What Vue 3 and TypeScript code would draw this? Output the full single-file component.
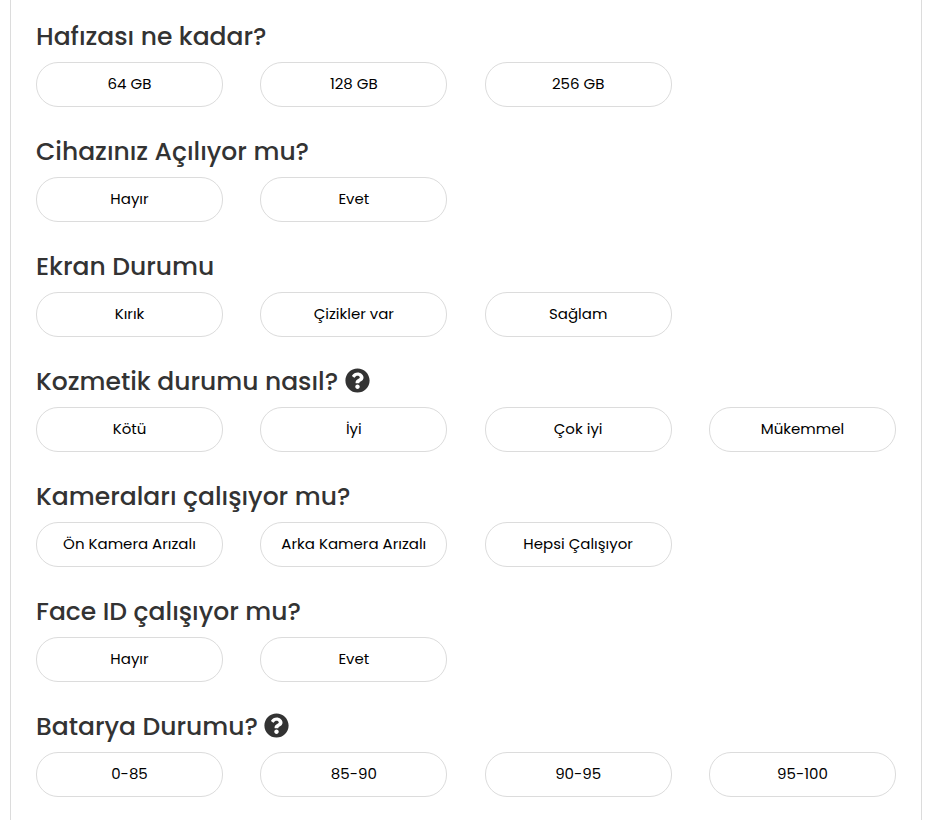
<script setup lang="ts">
interface Question {
  title: string
  help?: boolean
  options: string[]
}

const questions: Question[] = [
  { title: 'Hafızası ne kadar?', options: ['64 GB', '128 GB', '256 GB'] },
  { title: 'Cihazınız Açılıyor mu?', options: ['Hayır', 'Evet'] },
  { title: 'Ekran Durumu', options: ['Kırık', 'Çizikler var', 'Sağlam'] },
  {
    title: 'Kozmetik durumu nasıl?',
    help: true,
    options: ['Kötü', 'İyi', 'Çok iyi', 'Mükemmel'],
  },
  {
    title: 'Kameraları çalışıyor mu?',
    options: ['Ön Kamera Arızalı', 'Arka Kamera Arızalı', 'Hepsi Çalışıyor'],
  },
  { title: 'Face ID çalışıyor mu?', options: ['Hayır', 'Evet'] },
  { title: 'Batarya Durumu?', help: true, options: ['0-85', '85-90', '90-95', '95-100'] },
]
</script>

<template>
  <main class="panel">
    <section v-for="question in questions" :key="question.title" class="question">
      <h2 class="title">
        <span>{{ question.title }}</span>
        <svg v-if="question.help" class="help" viewBox="0 0 512 512" aria-hidden="true">
          <path
            fill="currentColor"
            d="M504 256c0 136.997-111.043 248-248 248S8 392.997 8 256C8 119.083 119.043 8 256 8s248 111.083 248 248zM262.655 90c-54.497 0-89.255 22.957-116.549 63.758-3.536 5.286-2.353 12.415 2.715 16.258l34.699 26.31c5.205 3.947 12.621 3.008 16.665-2.122 17.864-22.658 30.113-35.797 57.303-35.797 20.429 0 45.698 13.148 45.698 32.958 0 14.976-12.363 22.667-32.534 33.976C247.128 238.528 216 254.941 216 296v4c0 6.627 5.373 12 12 12h56c6.627 0 12-5.373 12-12v-1.333c0-28.462 83.186-29.647 83.186-106.667 0-58.002-60.165-102-116.531-102zM256 338c-25.365 0-46 20.635-46 46 0 25.364 20.635 46 46 46s46-20.636 46-46c0-25.365-20.635-46-46-46z"
          />
        </svg>
      </h2>
      <div class="options">
        <button v-for="option in question.options" :key="option" type="button" class="option">
          {{ option }}
        </button>
      </div>
    </section>
  </main>
</template>

<style>
body {
  background: #fff;
  overflow: hidden;
}
</style>

<style scoped>
.panel {
  box-sizing: border-box;
  width: 912px;
  height: 820px;
  margin-left: 10px;
  padding: 18px 25px 0;
  border: solid #dcdcdc;
  border-width: 0 1px;
  overflow: hidden;
  font-family: Poppins, Inter, sans-serif;
}

.question {
  height: 115px;
}

.title {
  display: flex;
  align-items: center;
  gap: 6.5px;
  height: 38px;
  margin: 0 0 6px;
  color: #333;
  font-size: 25px;
  font-weight: 500;
  line-height: 38px;
  white-space: nowrap;
}

.help {
  flex: none;
  width: 25px;
  height: 25px;
  margin-bottom: 3px;
}

.options {
  display: grid;
  grid-template-columns: repeat(4, 187px);
  justify-content: space-between;
}

.option {
  box-sizing: border-box;
  height: 45px;
  padding: 0 0 2px;
  border: 1px solid #dcdcdc;
  border-radius: 22px;
  background: #fff;
  color: #000;
  font-family: inherit;
  font-size: 15px;
  font-weight: 400;
  line-height: 22px;
  text-align: center;
}
</style>
